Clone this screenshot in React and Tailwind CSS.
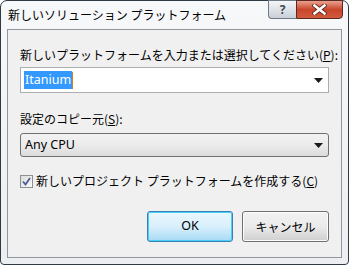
import React from 'react';

const jp = { fontFamily: '"Noto Sans CJK JP", "Noto Sans", sans-serif' };
const lat = { fontFamily: '"Noto Sans", "Noto Sans CJK JP", sans-serif' };

const Arrow = () => (
  <svg width="9" height="5" viewBox="0 0 9 5" className="block">
    <path d="M0 0 H9 L4.5 5 Z" fill="#1a1a1a" />
  </svg>
);

const App = () => {
  return (
    <div className="w-[349px] h-[265px] bg-white overflow-hidden">
      <div className="w-[349px] h-[265px] rounded-t-[7px] rounded-b-[4px] border border-[#2f3a44] bg-gradient-to-b from-[#f7f8fa] to-[#eceef1] flex flex-col">
        {/* title bar */}
        <div className="h-[28px] flex items-start justify-between">
          <div className="pl-[7px] pt-[7px] text-[12px] leading-[14px] text-black" style={jp}>
            新しいソリューション プラットフォーム
          </div>
          <div className="flex mr-[5px] mt-[-1px]">
            <div className="w-[28px] h-[19px] border border-[#6f7a86] border-r-0 rounded-bl-[4px] bg-gradient-to-b from-[#f4f6f8] to-[#c9d0d8] flex items-center justify-center text-[12px] font-bold text-[#3f4a55]" style={lat}>
              ?
            </div>
            <div className="w-[47px] h-[19px] border border-[#5a2a22] rounded-br-[4px] bg-gradient-to-b from-[#e9a08e] via-[#c9452b] to-[#d25a3c] flex items-center justify-center">
              <svg width="15" height="11" viewBox="0 0 15 11">
                <path d="M2.5 1.5 L12.5 9.5 M12.5 1.5 L2.5 9.5" stroke="#5a2418" strokeWidth="4.2" strokeLinecap="square" />
                <path d="M2.5 1.5 L12.5 9.5 M12.5 1.5 L2.5 9.5" stroke="#ffffff" strokeWidth="2.6" strokeLinecap="square" />
              </svg>
            </div>
          </div>
        </div>

        {/* client area */}
        <div className="mx-[6px] h-[229px] border border-[#8f969d] bg-[#f0f0f0] px-[12px] flex flex-col">
          <div className="mt-[18px] text-[12px] leading-[14px] text-black whitespace-nowrap" style={jp}>
            新しいプラットフォームを入力または選択してください(<span className="underline">P</span>):
          </div>
          <div className="mt-[5px] h-[26px] w-[309px] border border-[#abadb3] bg-white flex items-center pl-[3px] pr-[5px]">
            <span className="bg-[#3399ff] text-white text-[12.5px] leading-[18px] px-[1px]" style={lat}>Itanium</span>
            <span className="w-[1px] h-[17px] bg-[#d97a1f]" />
            <span className="flex-1" />
            <Arrow />
          </div>

          <div className="mt-[19px] text-[12px] leading-[14px] text-black" style={jp}>
            設定のコピー元(<span className="underline">S</span>):
          </div>
          <div className="mt-[7px] h-[24px] w-[309px] border border-[#707070] rounded-[3px] bg-gradient-to-b from-[#f2f2f2] via-[#ebebeb] to-[#dcdcdc] flex items-center pl-[4px] pr-[5px]">
            <span className="text-[12.5px] leading-[16px] text-black" style={lat}>Any CPU</span>
            <span className="flex-1" />
            <Arrow />
          </div>

          <div className="mt-[17px] flex items-center gap-[3px] h-[14px]">
            <div className="w-[13px] h-[13px] border border-[#8e8f8f] bg-gradient-to-br from-[#dcdcdc] to-[#fbfbfb] flex items-center justify-center">
              <svg width="9" height="9" viewBox="0 0 9 9">
                <path d="M1 4.5 L3.5 7.5 L8 1" fill="none" stroke="#4a5f97" strokeWidth="1.8" />
              </svg>
            </div>
            <span className="text-[12px] leading-[14px] text-black whitespace-nowrap" style={jp}>
              新しいプロジェクト プラットフォームを作成する(<span className="underline">C</span>)
            </span>
          </div>

          <div className="mt-[23px] flex justify-end gap-[9px]">
            <div className="w-[86px] h-[31px] rounded-[3px] border border-[#3c7fb1] bg-gradient-to-b from-[#eaf6fd] via-[#d9f0fc] to-[#a7d9f5] shadow-[inset_0_0_0_1px_#48d1f8] flex items-center justify-center text-[12.5px] text-black" style={lat}>
              OK
            </div>
            <div className="w-[87px] h-[31px] rounded-[3px] border border-[#707070] bg-gradient-to-b from-[#f2f2f2] via-[#ebebeb] to-[#cfcfcf] shadow-[inset_0_0_0_1px_#fcfcfc] flex items-center justify-center text-[12px] text-black" style={jp}>
              キャンセル
            </div>
          </div>
        </div>
      </div>
    </div>
  );
};

export default App;
